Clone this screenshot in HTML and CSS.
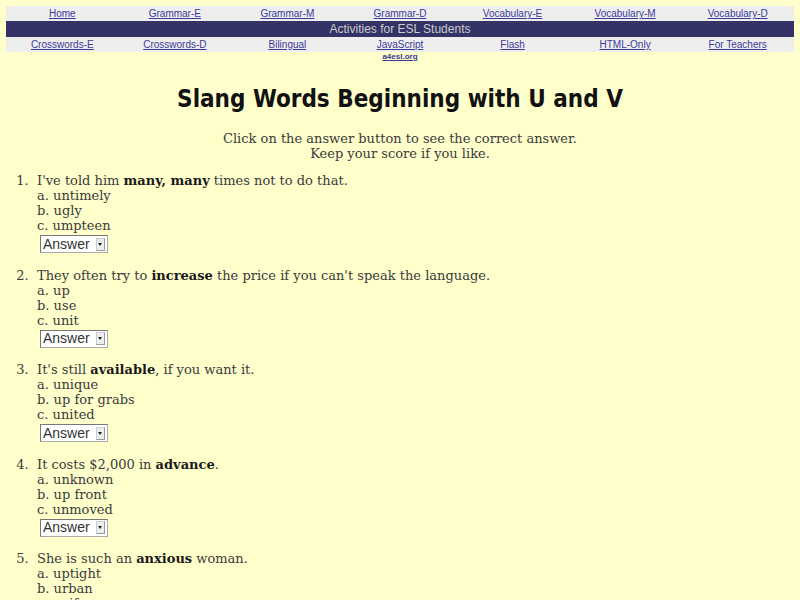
FILE: index.html
```html
<!DOCTYPE html>
<html>
<head>
<meta charset="utf-8">
<title>Slang Words Beginning with U and V</title>
<link rel="stylesheet" href="styles.css">
</head>
<body>
<table class="nav">
  <tr class="navrow">
    <td><a href="#">Home</a></td>
    <td><a href="#">Grammar-E</a></td>
    <td><a href="#">Grammar-M</a></td>
    <td><a href="#">Grammar-D</a></td>
    <td><a href="#">Vocabulary-E</a></td>
    <td><a href="#">Vocabulary-M</a></td>
    <td><a href="#">Vocabulary-D</a></td>
  </tr>
  <tr class="band">
    <td colspan="7">Activities for ESL Students</td>
  </tr>
  <tr class="navrow">
    <td><a href="#">Crosswords-E</a></td>
    <td><a href="#">Crosswords-D</a></td>
    <td><a href="#">Bilingual</a></td>
    <td><a href="#">JavaScript</a></td>
    <td><a href="#">Flash</a></td>
    <td><a href="#">HTML-Only</a></td>
    <td><a href="#">For Teachers</a></td>
  </tr>
  <tr class="siterow">
    <td></td><td></td><td></td>
    <td><a href="#">a4esl.org</a></td>
    <td></td><td></td><td></td>
  </tr>
</table>

<h1 class="title">Slang Words Beginning with U and V</h1>
<p class="intro">Click on the answer button to see the correct answer.<br>Keep your score if you like.</p>

<ol class="quiz">
  <li>I've told him <b>many, many</b> times not to do that.<br>a. untimely<br>b. ugly<br>c. umpteen
    <div class="ans"><span class="sel"><span class="seltext">Answer</span><span class="arrow"></span></span></div></li>
  <li>They often try to <b>increase</b> the price if you can't speak the language.<br>a. up<br>b. use<br>c. unit
    <div class="ans"><span class="sel"><span class="seltext">Answer</span><span class="arrow"></span></span></div></li>
  <li>It's still <b>available</b>, if you want it.<br>a. unique<br>b. up for grabs<br>c. united
    <div class="ans"><span class="sel"><span class="seltext">Answer</span><span class="arrow"></span></span></div></li>
  <li>It costs $2,000 in <b>advance</b>.<br>a. unknown<br>b. up front<br>c. unmoved
    <div class="ans"><span class="sel"><span class="seltext">Answer</span><span class="arrow"></span></span></div></li>
  <li>She is such an <b>anxious</b> woman.<br>a. uptight<br>b. urban<br>c. uniform
    <div class="ans"><span class="sel"><span class="seltext">Answer</span><span class="arrow"></span></span></div></li>
</ol>
</body>
</html>
```

FILE: styles.css
```css
html, body {
  background: #ffffcc;
}
body {
  margin: 6px;
  font-family: "DejaVu Serif", serif;
  font-size: 13px;
  color: #3a3a3a;
}
.nav {
  width: 788px;
  border-collapse: collapse;
  table-layout: fixed;
  font-family: "Liberation Sans", Arial, sans-serif;
  font-size: 10px;
}
.nav td {
  text-align: center;
  padding: 0;
}
.navrow td {
  background: #eeeeee;
  height: 15px;
  line-height: 15px;
}
.nav a {
  color: #3a3a99;
}
.band td {
  background: #333366;
  color: #cccccc;
  font-size: 12px;
  height: 16px;
  line-height: 16px;
}
.siterow td {
  font-size: 8px;
  line-height: 9px;
  height: 9px;
  font-weight: bold;
}
.title {
  font-family: "DejaVu Sans Condensed", "DejaVu Sans", sans-serif;
  font-weight: bold;
  font-size: 24px;
  color: #111111;
  text-align: center;
  margin: 22px 0 0 0;
  line-height: 32px;
}
.intro {
  text-align: center;
  line-height: 15px;
  margin: 16px 0 0 0;
}
.quiz {
  margin: 12px 0 0 0;
  padding-left: 31px;
  line-height: 15px;
}
.quiz li::marker {
  content: counter(list-item) ".\00a0\00a0";
}
.quiz li {
  margin-bottom: 14.5px;
}
.quiz b {
  color: #1a1a1a;
}
.ans {
  margin-top: 2px;
  margin-left: 3px;
}
.sel {
  display: inline-flex;
  align-items: center;
  height: 18px;
  border: 1px solid #aaaaaa;
  border-top-color: #777777;
  border-left-color: #777777;
  background: #ffffff;
  font-family: "Liberation Sans", Arial, sans-serif;
  font-size: 14px;
  line-height: 17px;
  box-sizing: border-box;
}
.seltext {
  padding: 0 1px 0 2px;
  width: 52px;
  color: #333333;
}
.arrow {
  width: 9px;
  height: 13px;
  margin-right: 2px;
  background: #eeeeee;
  border: 1px solid #cccccc;
  border-right-color: #999999;
  border-bottom-color: #999999;
  box-sizing: border-box;
  position: relative;
}
.arrow::after {
  content: "";
  position: absolute;
  left: 1px;
  top: 4px;
  border-left: 2.5px solid transparent;
  border-right: 2.5px solid transparent;
  border-top: 3px solid #222222;
}
```
